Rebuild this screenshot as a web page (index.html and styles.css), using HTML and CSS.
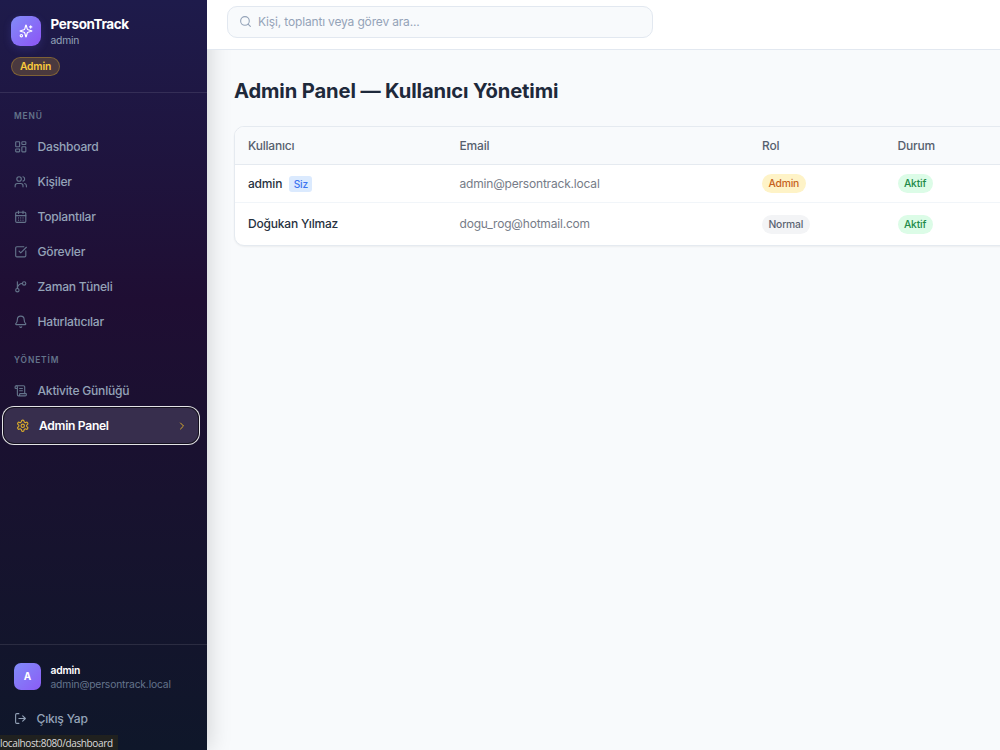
FILE: index.html
```
<!DOCTYPE html>
<html lang="tr">
<head>
    <meta charset="UTF-8">
    <meta name="viewport" content="width=device-width, initial-scale=1.0">
    <title>PersonTrack</title>
    <link rel="stylesheet" href="styles.css">
</head>
<body>
    <aside class="sidebar">
        <div class="brand">
            <div class="brand-row">
                <div class="logo">
                    <svg viewBox="0 0 24 24"><path d="M9.94 15.5A2 2 0 0 0 8.5 14.06l-6.14-1.58a.5.5 0 0 1 0-.96L8.5 9.94A2 2 0 0 0 9.94 8.5l1.58-6.14a.5.5 0 0 1 .96 0l1.58 6.14a2 2 0 0 0 1.44 1.44l6.14 1.58a.5.5 0 0 1 0 .96l-6.14 1.58a2 2 0 0 0-1.44 1.44l-1.58 6.14a.5.5 0 0 1-.96 0z"/><path d="M20 3v4M22 5h-4"/><circle cx="4" cy="20" r="2"/></svg>
                </div>
                <div>
                    <div class="brand-name">PersonTrack</div>
                    <div class="brand-user">admin</div>
                </div>
            </div>
            <span class="role">Admin</span>
        </div>

        <nav class="menu">
            <div class="menu-title">MENÜ</div>
            <a class="item">
                <svg viewBox="0 0 24 24"><rect x="3" y="3" width="7" height="9" rx="1"/><rect x="14" y="3" width="7" height="5" rx="1"/><rect x="14" y="12" width="7" height="9" rx="1"/><rect x="3" y="16" width="7" height="5" rx="1"/></svg>
                <span>Dashboard</span>
            </a>
            <a class="item">
                <svg viewBox="0 0 24 24"><path d="M16 21v-2a4 4 0 0 0-4-4H6a4 4 0 0 0-4 4v2"/><circle cx="9" cy="7" r="4"/><path d="M22 21v-2a4 4 0 0 0-3-3.87M16 3.13a4 4 0 0 1 0 7.75"/></svg>
                <span>Kişiler</span>
            </a>
            <a class="item">
                <svg viewBox="0 0 24 24"><path d="M8 2v4M16 2v4M3 10h18"/><rect x="3" y="4" width="18" height="18" rx="2"/><path d="M8 14h.01M12 14h.01M16 14h.01M8 18h.01M12 18h.01M16 18h.01"/></svg>
                <span>Toplantılar</span>
            </a>
            <a class="item">
                <svg viewBox="0 0 24 24"><path d="M21 10.5V19a2 2 0 0 1-2 2H5a2 2 0 0 1-2-2V5a2 2 0 0 1 2-2h12.5"/><path d="m9 11 3 3L22 4"/></svg>
                <span>Görevler</span>
            </a>
            <a class="item">
                <svg viewBox="0 0 24 24"><path d="M6 3v12"/><circle cx="18" cy="6" r="3"/><circle cx="6" cy="18" r="3"/><path d="M15 6a9 9 0 0 0-9 9"/></svg>
                <span>Zaman Tüneli</span>
            </a>
            <a class="item">
                <svg viewBox="0 0 24 24"><path d="M10.27 21a2 2 0 0 0 3.46 0"/><path d="M3.26 15.33A1 1 0 0 0 4 17h16a1 1 0 0 0 .74-1.67C19.41 13.96 18 12.5 18 8A6 6 0 0 0 6 8c0 4.5-1.41 5.96-2.74 7.33"/></svg>
                <span>Hatırlatıcılar</span>
            </a>

            <div class="menu-title second">YÖNETİM</div>
            <a class="item">
                <svg viewBox="0 0 24 24"><path d="M15 12h-5M15 8h-5M19 17V5a2 2 0 0 0-2-2H4"/><path d="M8 21h12a2 2 0 0 0 2-2v-1a1 1 0 0 0-1-1H11a1 1 0 0 0-1 1v1a2 2 0 1 1-4 0V5a2 2 0 1 0-4 0v2a1 1 0 0 0 1 1h3"/></svg>
                <span>Aktivite Günlüğü</span>
            </a>
            <a class="item active">
                <svg viewBox="0 0 24 24"><path d="M12.22 2h-.44a2 2 0 0 0-2 2v.18a2 2 0 0 1-1 1.73l-.43.25a2 2 0 0 1-2 0l-.15-.08a2 2 0 0 0-2.73.73l-.22.38a2 2 0 0 0 .73 2.73l.15.1a2 2 0 0 1 1 1.72v.51a2 2 0 0 1-1 1.74l-.15.09a2 2 0 0 0-.73 2.73l.22.38a2 2 0 0 0 2.73.73l.15-.08a2 2 0 0 1 2 0l.43.25a2 2 0 0 1 1 1.73V20a2 2 0 0 0 2 2h.44a2 2 0 0 0 2-2v-.18a2 2 0 0 1 1-1.73l.43-.25a2 2 0 0 1 2 0l.15.08a2 2 0 0 0 2.73-.73l.22-.39a2 2 0 0 0-.73-2.73l-.15-.08a2 2 0 0 1-1-1.74v-.5a2 2 0 0 1 1-1.74l.15-.09a2 2 0 0 0 .73-2.73l-.22-.38a2 2 0 0 0-2.73-.73l-.15.08a2 2 0 0 1-2 0l-.43-.25a2 2 0 0 1-1-1.73V4a2 2 0 0 0-2-2z"/><circle cx="12" cy="12" r="3"/></svg>
                <span>Admin Panel</span>
                <svg class="chevron" viewBox="0 0 24 24"><path d="m9 18 6-6-6-6"/></svg>
            </a>
        </nav>

        <div class="account">
            <div class="account-row">
                <div class="avatar">A</div>
                <div>
                    <div class="account-name">admin</div>
                    <div class="account-mail">admin@persontrack.local</div>
                </div>
            </div>
            <a class="logout">
                <svg viewBox="0 0 24 24"><path d="M9 21H5a2 2 0 0 1-2-2V5a2 2 0 0 1 2-2h4M16 17l5-5-5-5M21 12H9"/></svg>
                <span>Çıkış Yap</span>
            </a>
        </div>
    </aside>

    <div class="main">
        <header class="topbar">
            <div class="search">
                <svg viewBox="0 0 24 24"><circle cx="11" cy="11" r="8"/><path d="m21 21-4.3-4.3"/></svg>
                <span>Kişi, toplantı veya görev ara...</span>
            </div>
        </header>
        <main class="content">
            <h1>Admin Panel — Kullanıcı Yönetimi</h1>
            <div class="card">
                <div class="row head">
                    <span>Kullanıcı</span><span>Email</span><span>Rol</span><span>Durum</span>
                </div>
                <div class="row">
                    <span class="user">admin <b class="you">Siz</b></span>
                    <span class="mail">admin@persontrack.local</span>
                    <span><b class="pill amber">Admin</b></span>
                    <span><b class="pill green">Aktif</b></span>
                </div>
                <div class="row tall">
                    <span class="user">Doğukan Yılmaz</span>
                    <span class="mail">dogu_rog@hotmail.com</span>
                    <span><b class="pill gray">Normal</b></span>
                    <span><b class="pill green">Aktif</b></span>
                </div>
            </div>
        </main>
    </div>

    <div class="status">localhost:8080/dashboard</div>
</body>
</html>
```
FILE: styles.css
```
* { box-sizing: border-box; }
body { margin: 0; height: 750px; display: flex; overflow: hidden; background: #f8fafc; font-family: Inter, "Liberation Sans", sans-serif; font-size: 12px; letter-spacing: -.19px; color: #1e293b; }
svg { fill: none; stroke: currentColor; stroke-width: 2; stroke-linecap: round; stroke-linejoin: round; flex-shrink: 0; }

.sidebar { width: 207px; height: 750px; flex-shrink: 0; display: flex; flex-direction: column; background: linear-gradient(180deg, #1e1b4b 0%, #1f0e33 40%, #0f172a 100%); box-shadow: 3px 0 21px rgba(0, 0, 0, .15); }
.brand { height: 93px; padding: 15px 11px 0; border-bottom: 1px solid rgba(255, 255, 255, .1); }
.brand-row { display: flex; gap: 9.5px; height: 32px; align-items: center; }
.logo { width: 30px; height: 30px; border-radius: 9px; display: flex; align-items: center; justify-content: center; color: #fff; background: linear-gradient(135deg, #818cf8, #8b5cf6 85%); box-shadow: 0 3px 8px rgba(99, 102, 241, .2); }
.logo svg { width: 14px; height: 14px; }
.brand-name { padding-top: 1px; font-size: 13.5px; line-height: 17px; font-weight: 700; letter-spacing: -.4px; color: #fff; }
.brand-user { font-size: 10.3px; line-height: 14px; color: #94a3b8; }
.role { display: block; width: 49px; height: 19px; margin-top: 10px; border: 1px solid rgba(251, 191, 36, .3); border-radius: 10px; background: rgba(251, 191, 36, .2); color: #fbcb3c; font-size: 10.3px; line-height: 17px; font-weight: 600; text-align: center; }

.menu { flex: 1; padding: 17px 9px 0 3.5px; }
.menu-title { height: 12px; margin: 0 0 8px 10.5px; font-size: 8.4px; line-height: 12px; font-weight: 600; letter-spacing: .9px; color: #64748b; }
.menu-title.second { margin: 16px 0 8px 10.5px; }
.item { display: flex; align-items: center; gap: 10px; height: 33px; margin-bottom: 2px; padding: 0 10.5px; font-size: 12.1px; font-weight: 500; letter-spacing: -.23px; color: #94a3b8; }
.item svg { width: 13.5px; height: 13.5px; color: #64748b; }
.item.active { height: 35px; margin: -1px 0 0; padding: 0 10px 0 12px; border-radius: 10px; background: #372e4d; color: #fff; font-weight: 600; letter-spacing: -.3px; box-shadow: 0 0 0 1px #15111f, 0 0 0 2px #e4e4e7; }
.item.active svg { color: #d9ab2b; }
.item.active .chevron { width: 12px; height: 12px; margin-left: auto; }

.account { height: 106px; padding: 18px 14px 0; border-top: 1px solid rgba(255, 255, 255, .1); }
.account-row { display: flex; align-items: center; gap: 9.5px; height: 27px; }
.avatar { width: 27px; height: 27px; border-radius: 7px; background: linear-gradient(135deg, #818cf8, #8b5cf6); color: #fff; font-size: 10px; line-height: 27px; font-weight: 700; text-align: center; }
.account-name { padding-top: 1px; font-size: 10.3px; line-height: 13px; font-weight: 600; color: #fff; }
.account-mail { font-size: 10.3px; line-height: 14px; letter-spacing: -.16px; color: #64748b; }
.logout { display: flex; align-items: center; gap: 9.5px; height: 20px; margin-top: 18px; font-size: 12.1px; font-weight: 500; letter-spacing: -.22px; color: #94a3b8; }
.logout svg { width: 13px; height: 13px; }

.main { flex: 1; min-width: 0; overflow: hidden; }
.topbar { position: relative; height: 50px; padding: 6px 20px; background: #fff; border-bottom: 1px solid #e2e8f0; }
.search { width: 426px; height: 32px; display: flex; align-items: center; gap: 6px; padding: 0 11px 1px; border: 1px solid #e2e8f0; border-radius: 10px; background: #f8fafc; color: #94a3b8; letter-spacing: -.16px; }
.search svg { width: 13px; height: 13px; }
.content { padding: 27px 0 0 27px; }
h1 { margin: 0 0 21px; font-size: 20.2px; line-height: 28px; font-weight: 700; letter-spacing: -.13px; }
.card { width: 900px; border: 1px solid #e5eaf0; border-radius: 10px; background: #fff; box-shadow: 0 1px 2px rgba(0, 0, 0, .05); overflow: hidden; }
.row { display: grid; grid-template-columns: 211.5px 302.5px 135.5px 1fr; align-items: center; height: 38px; padding-left: 13px; border-bottom: 1px solid #f1f5f9; }
.row.head { background: #f8fafc; color: #56606e; font-weight: 500; border-color: #e5eaf0; }
.row.tall { height: 42px; border-bottom: 0; }
.row.tall .user, .row.tall .mail { padding-bottom: 1px; }
.user { font-weight: 500; color: #27313f; }
.mail { color: #767c88; }
.you { display: inline-block; margin-left: 4px; padding: 0 4.5px; border-radius: 3px; background: #dbeafe; color: #3b74f0; font-size: 10.2px; line-height: 16px; font-weight: 500; }
.pill { display: inline-block; padding: 0 6.5px; border-radius: 10px; font-size: 10.3px; line-height: 19px; font-weight: 500; }
.amber { background: #fef3c7; color: #c6621c; }
.green { background: #dcfce7; color: #228a49; }
.gray { background: #f3f4f6; color: #5b6472; }

/* link hint in the window corner */
.status { position: absolute; left: 0; bottom: 0; width: 118px; height: 15px; overflow: hidden; background: #20211f; color: #dcdcdc; font-family: "Open Sans", sans-serif; font-size: 10px; line-height: 16px; letter-spacing: -.37px; white-space: nowrap; }
```
